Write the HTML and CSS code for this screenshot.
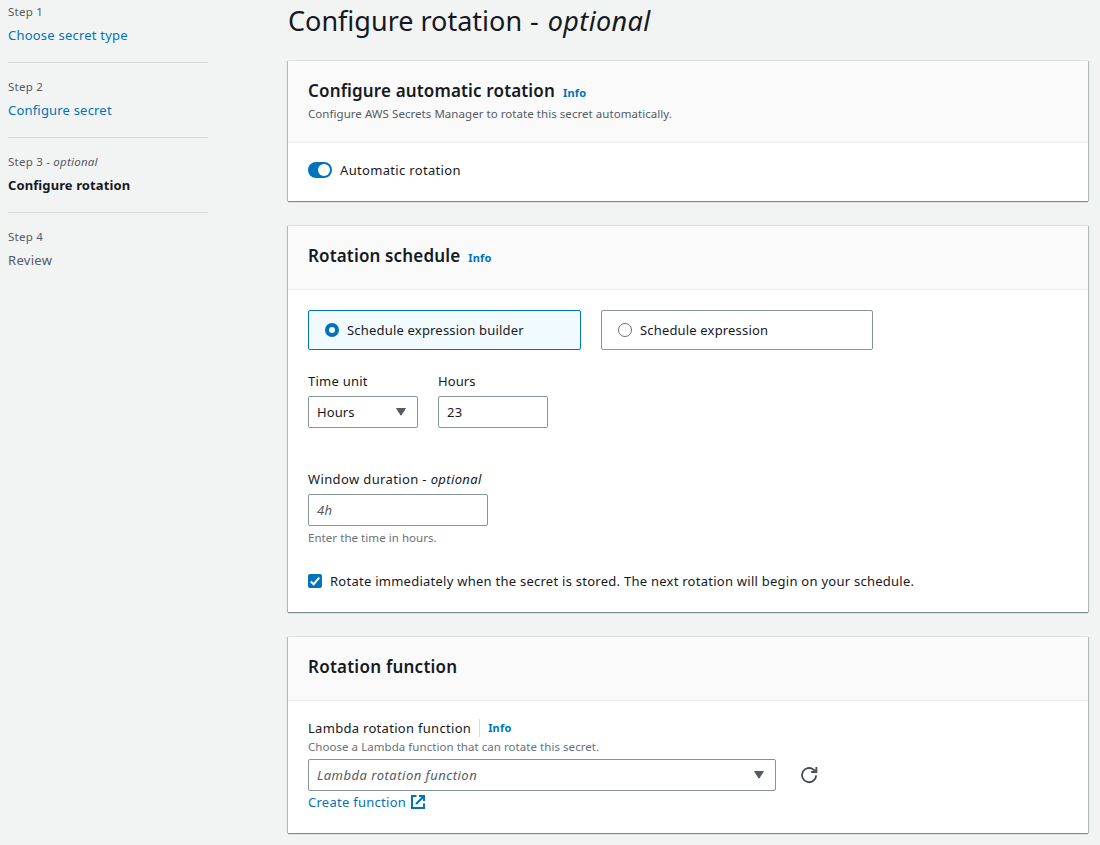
FILE: index.html
```html
<!DOCTYPE html>
<html lang="en">
<head>
<meta charset="utf-8">
<title>Configure rotation</title>
<link rel="stylesheet" href="styles.css">
</head>
<body>
<div class="layout">
  <nav class="steps">
    <div class="step"><div class="step-num">Step 1</div><a class="step-name link"><span class="t-choose">Choose secret type</span></a></div>
    <div class="step"><div class="step-num">Step 2</div><a class="step-name link"><span class="t-secret">Configure secret</span></a></div>
    <div class="step"><div class="step-num"><span class="t-step3">Step 3 - <em>optional</em></span></div><div class="step-name current"><span class="t-current">Configure rotation</span></div></div>
    <div class="step"><div class="step-num">Step 4</div><div class="step-name"><span class="t-review">Review</span></div></div>
  </nav>
  <main class="main">
    <h1 class="title"><span class="t-title">Configure rotation</span><span class="t-dash"> - </span><em class="t-title-opt">optional</em></h1>

    <section class="card">
      <header class="card-head tall">
        <h2 class="heading"><span class="t-auto">Configure automatic rotation</span><a class="info">Info</a></h2>
        <p class="desc"><span class="t-desc">Configure AWS Secrets Manager to rotate this secret automatically.</span></p>
      </header>
      <div class="card-body toggle-body">
        <label class="toggle-row"><span class="toggle"><span class="knob"></span></span><span class="t-toggle">Automatic rotation</span></label>
      </div>
    </section>

    <section class="card">
      <header class="card-head">
        <h2 class="heading"><span class="t-sched">Rotation schedule</span><a class="info">Info</a></h2>
      </header>
      <div class="card-body sched-body">
        <div class="tiles">
          <label class="tile selected"><span class="radio on"></span><span class="t-builder">Schedule expression builder</span></label>
          <label class="tile"><span class="radio"></span><span class="t-expr">Schedule expression</span></label>
        </div>
        <div class="fields">
          <div class="field"><span class="label"><span class="t-unit">Time unit</span></span>
            <div class="input select"><span class="t-hours">Hours</span><svg class="caret" viewBox="0 0 12 10"><path d="M1.6 1.5h8.8L6 8.2z"/></svg></div></div>
          <div class="field"><span class="label"><span class="t-hours">Hours</span></span>
            <div class="input"><span class="t-num">23</span></div></div>
        </div>
        <div class="window">
          <span class="label"><span class="t-window">Window duration - <em>optional</em></span></span>
          <div class="input window-input"><em class="placeholder t-num">4h</em></div>
          <p class="hint"><span class="t-desc">Enter the time in hours.</span></p>
        </div>
        <label class="check-row"><svg class="checkbox" viewBox="0 0 14 14"><rect width="14" height="14" rx="2"/><path d="M2.7 7.4l3 2.8 5.5-6.6"/></svg><span class="t-rotate">Rotate immediately when the secret is stored. The next rotation will begin on your schedule.</span></label>
      </div>
    </section>

    <section class="card">
      <header class="card-head">
        <h2 class="heading"><span class="t-func">Rotation function</span></h2>
      </header>
      <div class="card-body func-body">
        <div class="label-row"><span class="t-lambda">Lambda rotation function</span><a class="info divided">Info</a></div>
        <p class="func-desc"><span class="t-desc">Choose a Lambda function that can rotate this secret.</span></p>
        <div class="select-row">
          <div class="input select lambda"><em class="placeholder t-lambda-ph">Lambda rotation function</em><svg class="caret" viewBox="0 0 12 10"><path d="M1.6 1.5h8.8L6 8.2z"/></svg></div>
          <svg class="refresh" viewBox="0 0 16 16"><path d="M15.2 8.4A7.1 7.1 0 1 1 12.6 2.6L15 5"/><path d="M10.2 5H15.4V0"/><path class="tip" d="M11.5 5.5L15.8 1v4.5z"/></svg>
        </div>
        <a class="create link"><span class="t-create">Create function</span><svg class="external" viewBox="0 0 14 14"><path d="M5.5 1H1v12h12V8.5M8 1h5v5M13 1L5 9"/></svg></a>
      </div>
    </section>
  </main>
</div>
</body>
</html>
```
FILE: styles.css
```css
* { box-sizing: border-box; }
body {
  margin: 0;
  background: #f2f3f3;
  color: #16191f;
  font-family: "Noto Sans", "Open Sans", sans-serif;
  font-size: 13px;
  line-height: 22px;
  height: 845px;
  overflow: hidden;
}
h1, h2, p { margin: 0; font-weight: 400; }
span, a, em { white-space: pre; }
.layout { display: flex; gap: 80px; padding-left: 8px; }
.link, .info { color: #0073bb; }

.steps { width: 200px; }
.step { height: 75px; border-bottom: 1px solid #d5dbdb; color: #545b64; }
.step:first-child { height: 63px; }
.step:last-child { border: 0; }
.step-num { font-size: 11.5px; line-height: 16px; padding-top: 4px; letter-spacing: .23px; }
.step + .step .step-num { padding-top: 16px; }
.step-name { display: block; margin-top: 4px; line-height: 22px; }
.step .link { color: #0073bb; }
.step .current { color: #16191f; font-weight: 700; }

.main { width: 800px; }
.title { font-size: 27px; line-height: 36px; padding-top: 3px; height: 61px; }
.card {
  margin-bottom: 25px;
  background: #fff;
  box-shadow: 0 1px 1px 0 rgba(0, 28, 36, .45), 1px 0 1px 0 rgba(0, 28, 36, .2), -1px 0 1px 0 rgba(0, 28, 36, .2), 0 -1px 0 0 #eaeded;
}
.card-head { height: 64px; padding: 19px 20px 0; background: #fafafa; border-bottom: 1px solid #eaeded; }
.card-head.tall { height: 82px; }
.heading { display: flex; align-items: baseline; gap: 8px; font-size: 17px; line-height: 22px; font-weight: 600; }
.info { font-size: 11px; font-weight: 700; letter-spacing: .2px; }
.desc { font-size: 11.5px; line-height: 18px; margin-top: 1px; color: #545b64; }
.card-body { padding: 0 20px; }
.toggle-body { height: 58px; padding-top: 16px; }
.toggle-row, .check-row { display: flex; align-items: center; gap: 8px; }
.toggle { display: flex; justify-content: flex-end; width: 24px; height: 16px; padding: 2px; border-radius: 8px; background: #0073bb; }
.knob { width: 12px; height: 12px; border-radius: 50%; background: #fff; }

.sched-body { height: 322px; padding-top: 20px; }
.tiles { display: flex; gap: 20px; }
.tile { display: flex; align-items: center; gap: 8px; width: 272px; height: 40px; padding-left: 16px; border: 1px solid #879596; border-radius: 2px; }
.tile.selected { width: 273px; border-color: #0073bb; background: #f1faff; }
.radio { width: 14px; height: 14px; border: 1px solid #687078; border-radius: 50%; background: #fff; }
.radio.on { border: 4px solid #0073bb; }
.fields { display: flex; gap: 20px; margin-top: 20px; }
.field { width: 110px; }
.label { display: block; height: 26px; line-height: 22px; }
.input { display: flex; align-items: center; height: 32px; padding: 0 8px; border: 1px solid #879596; border-radius: 2px; background: #fff; }
.select { justify-content: space-between; padding-right: 10px; }
.caret { width: 12px; height: 10px; fill: #545b64; stroke: #545b64; stroke-width: 1; stroke-linejoin: round; }
.window { width: 180px; margin-top: 40px; }
.placeholder { color: #545b64; }
.hint { font-size: 11.5px; line-height: 16px; margin-top: 4px; color: #687078; }
.check-row { margin-top: 24px; }
.checkbox { width: 14px; height: 14px; fill: #0073bb; }
.checkbox path { fill: none; stroke: #fff; stroke-width: 2; }

.func-body { height: 132px; padding-top: 16px; }
.label-row { display: flex; align-items: center; gap: 8px; height: 22px; }
.divided { border-left: 1px solid #d5dbdb; line-height: 18px; padding-left: 8px; }
.func-desc { font-size: 11.5px; line-height: 16px; color: #687078; }
.select-row { display: flex; align-items: center; gap: 25px; margin-top: 4px; }
.lambda { width: 468px; }
.refresh { width: 16px; height: 16px; fill: none; stroke: #414750; stroke-width: 1.8; overflow: visible; }
.refresh .tip { fill: #545b64; stroke: none; }
.create { display: flex; align-items: center; gap: 5px; }
.external { width: 14px; height: 14px; fill: none; stroke: #0073bb; stroke-width: 2; }

/* Tracking per label */
.t-choose { letter-spacing: .22px; }
.t-secret { letter-spacing: .19px; }
.t-current { letter-spacing: .1px; }
.t-review { letter-spacing: .3px; }
.t-dash { letter-spacing: 1px; }
.t-title-opt { letter-spacing: .35px; }
.t-auto { letter-spacing: .15px; }
.t-desc { letter-spacing: .05px; }
.t-toggle { letter-spacing: .33px; }
.t-sched { letter-spacing: .15px; }
.t-builder { letter-spacing: .19px; }
.t-expr { letter-spacing: .17px; }
.t-unit { letter-spacing: .25px; }
.t-hours { letter-spacing: .1px; }
.t-num { letter-spacing: .3px; }
.t-window { letter-spacing: .37px; }
.t-rotate { letter-spacing: .255px; }
.t-func { letter-spacing: .24px; }
.t-lambda { letter-spacing: .3px; }
.t-lambda-ph { letter-spacing: .5px; }
.t-create { letter-spacing: .27px; }
```
